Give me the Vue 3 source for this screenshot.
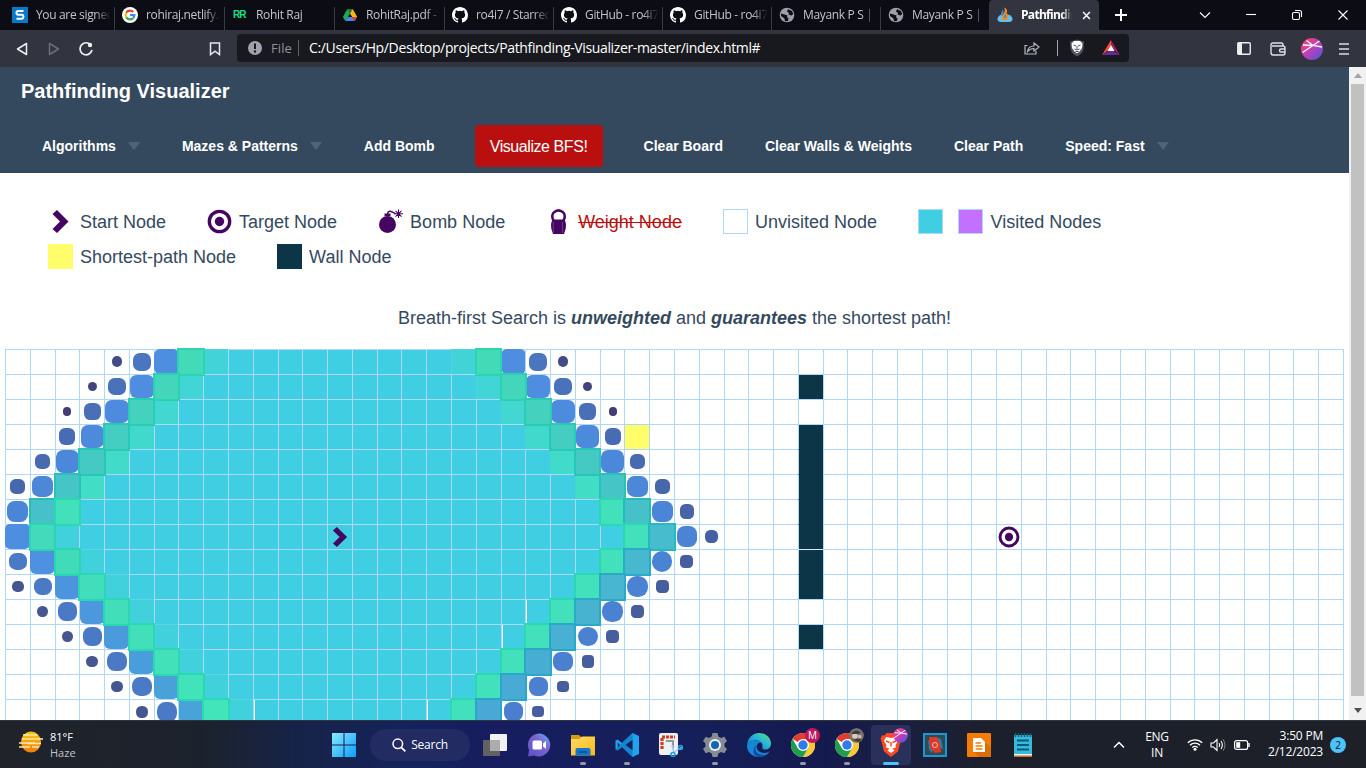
<script setup>
const tabs = [
  { icon: 's', title: 'You are signed' },
  { icon: 'google', title: 'rohiraj.netlify.a' },
  { icon: 'rr', title: 'Rohit Raj' },
  { icon: 'drive', title: 'RohitRaj.pdf -' },
  { icon: 'github', title: 'ro4i7 / Starred' },
  { icon: 'github', title: 'GitHub - ro4i7' },
  { icon: 'github', title: 'GitHub - ro4i7' },
  { icon: 'globe', title: 'Mayank P S | P' },
  { icon: 'globe', title: 'Mayank P S | P' },
  { icon: 'fire', title: 'Pathfindin', active: true },
]

const mix = (a, b, t) => a.map((v, i) => Math.round(v + (b[i] - v) * t))
const rgb = (c) => `rgb(${c.join(',')})`
const lerp = (a, b, t) => a + (b - a) * t

function dot(size, radius, color) {
  return {
    kind: 'dot',
    style: { width: size + 'px', height: size + 'px', borderRadius: radius, background: rgb(color) },
  }
}
function tile(bg, edge) {
  return { kind: 'tile', style: { background: rgb(bg), borderColor: `rgba(${edge.join(',')},.65)` } }
}

function describe(row, col) {
  if (col === 25 && row === 3) return { cls: 'short' }
  if (col === 32 && (row === 1 || (row >= 3 && row <= 9) || row === 11)) {
    const first = row === 1 || row === 3 || row === 11
    return { cls: row === 8 ? 'wall seam' : first ? 'wall first' : 'wall' }
  }
  const d = Math.abs(col - 13) + Math.abs(row - 7)
  const left = col < 13
  const late = left && row >= 7
  const k = late ? d + 1 : d
  const up = row / 7
  const down = (row - 7) / 7
  if (k === 16) {
    if (late) return row > 8 ? dot(lerp(11, 12, down), '45%', [70, 86, 145]) : {}
    return row < 3 ? dot(10.5 - row * 1.2, '48%', mix([69, 75, 134], [67, 61, 115], row / 2)) : {}
  }
  if (k === 15) {
    if (late) return dot(lerp(17, 20, down), '42%', [74, 122, 198])
    if (row < 8) return dot(lerp(18, 13.5, up), '38%', mix([74, 117, 191], [70, 97, 163], up))
    return dot(lerp(13.5, 11.5, down), '34%', [70, 94, 157])
  }
  if (k === 14) {
    if (late) {
      return {
        ...dot(25, row === 7 ? '5px' : '3px 3px 6px 6px', mix([78, 142, 225], [73, 163, 216], down)),
        kind: row === 7 ? 'dot' : 'dot rim',
      }
    }
    if (row < 8) return dot(lerp(24.5, 20.5, up), lerp(24, 38, up) + '%', mix([78, 142, 225], [75, 132, 213], up))
    return dot(lerp(21, 19, down), row < 12 ? '48%' : '40%', mix([75, 132, 213], [75, 126, 206], down))
  }
  if (k === 13) {
    if (late) return tile(mix([66, 218, 186], [66, 228, 185], down), [29, 212, 174])
    if (row < 8) return tile(mix([67, 218, 184], [70, 188, 204], up), mix([31, 211, 172], [18, 184, 184], up))
    return tile(mix([71, 187, 204], [73, 168, 214], down), [24, 166, 196])
  }
  if (k === 12) {
    if (late) return { cls: 'visited settling' }
    if (row < 6) return { cls: 'visited', style: { background: rgb(mix([66, 211, 217], [66, 221, 197], row / 5)), borderColor: rgb(mix([82, 209, 222], [66, 216, 200], row / 5)) } }
    return tile([66, 225, 188], [29, 212, 170])
  }
  if (k < 12) {
    const gap = (row === 10 && col === 21) || (row === 11 && col === 20) || (row === 14 && (col === 10 || col === 17))
    return { cls: gap ? 'visited gap' : 'visited' }
  }
  return {}
}

const cells = []
for (let r = 0; r < 15; r++) {
  for (let c = 0; c < 54; c++) {
    const info = describe(r, c)
    cells.push({
      key: r * 54 + c,
      cls: info.cls || '',
      own: info.kind ? null : info.style,
      kind: info.kind,
      style: info.style,
      start: r === 7 && c === 13,
      target: r === 7 && c === 40,
    })
  }
}
</script>

<template>
  <div class="screen">
    <svg width="0" height="0" class="defs">
      <defs>
        <linearGradient id="win" x1="0" y1="0" x2="1" y2="1"><stop offset="0" stop-color="#8be9ff" /><stop offset="1" stop-color="#0a9cfb" /></linearGradient>
        <linearGradient id="ava" x1="0" y1="0" x2="1" y2="1"><stop offset="0" stop-color="#f34a55" /><stop offset=".45" stop-color="#cc3bb4" /><stop offset="1" stop-color="#3f5be0" /></linearGradient>
        <linearGradient id="edge" x1="1" y1="0" x2="0" y2="1"><stop offset="0" stop-color="#5fe06a" /><stop offset=".45" stop-color="#27b6dd" /><stop offset="1" stop-color="#0b60b8" /></linearGradient>
        <linearGradient id="haze" x1="0" y1="0" x2="0" y2="1"><stop offset="0" stop-color="#fbc70b" /><stop offset="1" stop-color="#f37a0a" /></linearGradient>
        <linearGradient id="chat" x1="0" y1="1" x2="1" y2="0"><stop offset="0" stop-color="#5b50c4" /><stop offset=".6" stop-color="#7c63d0" /><stop offset="1" stop-color="#54b8f0" /></linearGradient>
        <linearGradient id="folder" x1="0" y1="0" x2="1" y2="1"><stop offset="0" stop-color="#ffdb62" /><stop offset="1" stop-color="#fbb81c" /></linearGradient>
        <symbol id="chrome" viewBox="0 0 24 24">
          <circle cx="12" cy="12" r="12" fill="#fff" />
          <path d="M12 12 1.6 6A12 12 0 0 1 22.4 6H12z" fill="#e33b2e" />
          <path d="M12 6H22.4A12 12 0 0 1 12 24L17.2 15z" fill="#fcc934" />
          <path d="M1.6 6 6.8 15 17.2 15 12 24A12 12 0 0 1 1.6 6z" fill="#1e9e4b" />
          <circle cx="12" cy="12" r="6" fill="#fff" /><circle cx="12" cy="12" r="4.7" fill="#2f7bed" />
        </symbol>
        <symbol id="avatar" viewBox="0 0 22 22">
          <circle cx="11" cy="11" r="11" fill="url(#ava)" />
          <path d="M1.500 14.500 18.500 3M5.500 2.500 12 7.500 21 9M2 7 12 7.500" stroke="#fff" stroke-width="1.300" fill="none" />
        </symbol>
        <symbol id="chev" viewBox="0 0 25 25"><path d="M4.500 5 9 1 20.500 12.500 9 24 4.500 20 12 12.500z" fill="#440661" /></symbol>
        <symbol id="aim" viewBox="0 0 25 25"><circle cx="12.500" cy="12.500" r="10.200" fill="none" stroke="#440661" stroke-width="3.300" /><circle cx="12.500" cy="12.500" r="4.700" fill="#440661" /></symbol>
      </defs>
    </svg>

    <header class="tabstrip">
      <div v-for="(t, i) in tabs" :key="i" class="tab" :class="{ active: t.active }">
        <svg v-if="t.icon === 's'" class="fav" viewBox="0 0 16 16"><rect width="16" height="16" fill="#0879c9" /><path d="M11.500 4H6.200Q4.500 4 4.500 5.800T6.200 7.800H9.800Q11.400 7.800 11.400 9.700T9.800 11.800H4.500" fill="none" stroke="#fff" stroke-width="2" /></svg>
        <svg v-else-if="t.icon === 'google'" class="fav" viewBox="0 0 16 16"><circle cx="8" cy="8" r="8" fill="#fff" /><g fill="none" stroke-width="2.200"><path d="M4.200 5.800A4.400 4.400 0 0 1 11.200 4.900" stroke="#ea4335" /><path d="M4.300 10.300A4.400 4.400 0 0 1 4.200 5.700" stroke="#fbbc05" /><path d="M11.100 11.100A4.400 4.400 0 0 1 4.300 10.300" stroke="#34a853" /><path d="M8 8H12.400A4.400 4.400 0 0 1 11.100 11.100" stroke="#4285f4" /></g></svg>
        <span v-else-if="t.icon === 'rr'" class="fav rr">RR</span>
        <svg v-else-if="t.icon === 'drive'" class="fav" viewBox="0 0 16 16"><path d="M5.300 2H10.700L8 6.500z" fill="#188038" /><path d="M5.300 2 .8 10 3.300 14 8 6.500z" fill="#20a757" /><path d="M10.700 2 15.200 10H10.200L8 6.500z" fill="#fbbc04" /><path d="M3.300 14 5.700 10H10.300L12.700 14z" fill="#4285f4" /><path d="M10.200 10H15.200L12.700 14z" fill="#ea4335" /></svg>
        <svg v-else-if="t.icon === 'github'" class="fav" viewBox="0 0 16 16"><path fill="#fff" d="M8 0C3.580 0 0 3.580 0 8c0 3.540 2.290 6.530 5.470 7.590.4.070.55-.17.55-.38 0-.19-.01-.82-.01-1.490-2.010.37-2.530-.49-2.690-.94-.09-.23-.48-.94-.82-1.130-.28-.15-.68-.52-.01-.53.63-.01 1.080.58 1.230.82.720 1.210 1.870.87 2.330.66.070-.52.28-.87.51-1.070-1.780-.2-3.640-.89-3.640-3.950 0-.87.31-1.590.82-2.150-.08-.2-.36-1.020.08-2.120 0 0 .67-.21 2.200.82a7.500 7.500 0 0 1 4 0c1.530-1.040 2.200-.82 2.200-.82.44 1.100.16 1.920.08 2.120.51.56.82 1.270.82 2.150 0 3.070-1.870 3.750-3.650 3.950.29.25.54.73.54 1.480 0 1.070-.01 1.930-.01 2.200 0 .21.15.46.55.38A8 8 0 0 0 16 8c0-4.420-3.580-8-8-8z" /></svg>
        <svg v-else-if="t.icon === 'globe'" class="fav" viewBox="0 0 16 16"><circle cx="8" cy="8" r="7.300" fill="#9ca0aa" /><path d="M2 6.500 5.500 7.500 8.500 8.500 8 10.500 9.500 11 9 14 6 14.200 5.500 11.500 2 9zM9 2.200 8 4.500 10 6 9.500 7.500 12.500 8.500 14.200 7 13 4z" fill="#0d0d16" /></svg>
        <svg v-else class="fav" viewBox="0 0 16 16"><path d="M4.500 7.500C-.5 9-1 15 4 15H12C17 15 16.500 9 11.500 7.500L9 13 6 13z" fill="#5cc4f5" /><path d="M7 .5C10 1.500 11 4 9.500 6 12.500 8 12 13.500 8 13.500 4 13.500 3.500 9.500 5.800 7.500 8 5.500 8.200 3 7 .5z" fill="#f58a28" /><path d="M5.500 2.500C4.500 4.500 4.500 6.500 3.500 8.500L5.500 8C7 6 6.500 4 5.500 2.500z" fill="#2e95dc" /><path d="M8 7.200C6.500 8.500 6.300 10.500 8 11 10 11 9.800 8.500 8 7.200z" fill="#2e95dc" /></svg>
        <span class="title">{{ t.title }}</span>
        <svg v-if="t.active" class="x" viewBox="0 0 10 10"><path d="M1.200 1.200 8.800 8.800M8.800 1.200 1.200 8.800" stroke="#fff" stroke-width="1.700" /></svg>
      </div>
      <svg class="plus" viewBox="0 0 12 12"><path d="M6 0V12M0 6H12" stroke="#fff" stroke-width="2" /></svg>
      <div class="winctl">
        <svg viewBox="0 0 12 12"><path d="M1 3.500 6 8.500 11 3.500" /></svg>
        <svg viewBox="0 0 12 12"><path d="M1 5.500H11" /></svg>
        <svg viewBox="0 0 12 12"><rect x="1.500" y="3.500" width="7" height="7" rx="1.500" /><path d="M4 1.500H8.500Q10.500 1.500 10.500 3.500V8" /></svg>
        <svg viewBox="0 0 12 12"><path d="M1.500 1.500 10.500 10.500M10.500 1.500 1.500 10.500" /></svg>
      </div>
    </header>

    <div class="toolbar">
      <svg class="back" viewBox="0 0 12 14"><path d="M10.500 1.500V12.500L1.500 7z" fill="none" stroke="#f0f0f4" stroke-width="1.500" stroke-linejoin="round" /></svg>
      <svg class="fwd" viewBox="0 0 12 14"><path d="M1.500 1.500V12.500L10.500 7z" fill="none" stroke="#6b6d7a" stroke-width="1.500" stroke-linejoin="round" /></svg>
      <svg class="reload" viewBox="0 0 16 16"><path d="M10.500 2.300A6 6 0 1 0 13.800 9.500" fill="none" stroke="#f0f0f4" stroke-width="1.700" stroke-linecap="round" /><circle cx="12" cy="4" r="2.200" fill="#f0f0f4" /></svg>
      <svg class="mark" viewBox="0 0 12 14"><path d="M1.500 1H10.500V12.600L6 9.200 1.500 12.600z" fill="none" stroke="#e6e6ec" stroke-width="1.500" /></svg>
      <div class="omni">
        <svg class="info" viewBox="0 0 14 14"><circle cx="7" cy="7" r="7" fill="#a0a3ae" /><path d="M7 2.500V8" stroke="#17191f" stroke-width="2" /><circle cx="7" cy="10.500" r="1.200" fill="#17191f" /></svg>
        <span class="file">File</span><i class="bar"></i>
        <span class="url">C:/Users/Hp/Desktop/projects/Pathfinding-Visualizer-master/index.html#</span>
        <svg class="share" viewBox="0 0 16 14"><path d="M3.500 4.500H1V13H12V10M3.500 10.500C4 6.500 6.500 5 10 5V2L15 6 10 10V7.500C7.500 7.500 5.500 8.200 3.500 10.500z" fill="none" stroke="#b4b7c0" stroke-width="1.200" /></svg>
        <i class="bar two"></i>
        <svg class="lion" viewBox="0 0 16 18"><path d="M8 .5 15 2.500 14.500 10Q13.500 15 8 17.500 2.500 15 1.500 10L1 2.500z" fill="#4e5263" /><path d="M5 2 11 2 13.500 4.500 13 9 10.500 12.500 8 14.500 5.500 12.500 3 9 2.500 4.500z" fill="#fff" /><path d="M4.500 6 7 7M11.500 6 9 7M8 7V10M5.500 10 8 11 10.500 10M6.500 12.500 9.500 12.500" stroke="#4e5263" stroke-width="1" fill="none" /></svg>
        <svg class="bat" viewBox="0 0 18 16"><path d="M9 0 0 15 9 8z" fill="#ff4c24" /><path d="M9 0 18 15 9 8z" fill="#9e1f63" /><path d="M0 15H18L9 9.500z" fill="#662d91" /><path d="M9 5 12.500 11H5.500z" fill="#fff" /></svg>
      </div>
      <svg class="side" viewBox="0 0 14 13"><rect x=".75" y=".75" width="12.500" height="11.500" rx="1" fill="none" stroke="#eee" stroke-width="1.400" /><rect x="1" y="1" width="4" height="11" fill="#eee" /></svg>
      <svg class="wallet" viewBox="0 0 16 14"><path d="M13 4V2.500Q13 1 11.500 1H3Q1 1 1 3V10.500Q1 13 3 13H13Q15 13 15 11V6Q15 4 13 4H2M15 7H11Q9.500 7 9.500 8.500T11 10H15" fill="none" stroke="#e0e0e6" stroke-width="1.400" /></svg>
      <svg class="ava"><use href="#avatar" /></svg>
      <svg class="burger" viewBox="0 0 10 12"><path d="M0 1H10M0 6H10M0 11H10" stroke="#dcdce2" stroke-width="1.500" /></svg>
    </div>

    <div class="viewport">
      <main class="page">
        <nav class="navbar">
          <h1>Pathfinding Visualizer</h1>
          <div class="menu">
            <a>Algorithms<i class="caret"></i></a>
            <a>Mazes &amp; Patterns<i class="caret"></i></a>
            <a>Add Bomb</a>
            <button>Visualize BFS!</button>
            <a>Clear Board</a>
            <a>Clear Walls &amp; Weights</a>
            <a>Clear Path</a>
            <a>Speed: Fast<i class="caret"></i></a>
          </div>
        </nav>
        <section class="legend">
          <div class="item"><svg class="ico"><use href="#chev" /></svg><span>Start Node</span></div>
          <div class="item"><svg class="ico"><use href="#aim" /></svg><span>Target Node</span></div>
          <div class="item"><svg class="ico" viewBox="0 0 25 25"><circle cx="9.500" cy="15.500" r="8.500" fill="#440661" /><path d="M6.500 7V4.500H12.500V7" fill="#440661" /><path d="M9.500 5Q10 1.500 13 2.500T17.500 5" fill="none" stroke="#440661" stroke-width="1.400" /><path d="M20.500 .5V9M16.500 4.700H25M17.500 1.800 23.500 7.700M23.500 1.800 17.500 7.700" stroke="#440661" stroke-width="1.100" /></svg><span>Bomb Node</span></div>
          <div class="item weight"><svg class="ico" viewBox="0 0 25 25"><path d="M7.500 11.500Q5 7 7.500 3.700 12.500-1 17.500 3.700 20 7 17.500 11.500" fill="none" stroke="#440661" stroke-width="2.500" /><path d="M6.500 10.500H18.500Q20.500 14 19.700 19.500L18 25H7L5.300 19.500Q4.500 14 6.500 10.500z" fill="#440661" /><path d="M7.300 13V24M16.500 13V24" stroke="#79529a" stroke-width=".7" /></svg><s>Weight Node</s></div>
          <div class="item"><i class="sw"></i><span>Unvisited Node</span></div>
          <div class="item"><i class="sw blue"></i><i class="sw purple"></i><span>Visited Nodes</span></div>
          <div class="item"><i class="sw yellow"></i><span>Shortest-path Node</span></div>
          <div class="item"><i class="sw dark"></i><span>Wall Node</span></div>
        </section>
        <p class="message">Breath-first Search is <b>unweighted</b> and <b>guarantees</b> the shortest path!</p>
        <section class="board">
          <div v-for="c in cells" :key="c.key" class="cell" :class="c.cls" :style="c.own">
            <span v-if="c.kind" :class="c.kind" :style="c.style"></span>
            <svg v-if="c.start" class="mid" viewBox="0 0 25 25"><use href="#chev" /></svg>
            <svg v-if="c.target" class="mid" viewBox="0 0 25 25"><use href="#aim" /></svg>
          </div>
        </section>
      </main>
      <aside class="scroll"><i class="up"></i><i class="thumb"></i><i class="down"></i></aside>
    </div>

    <footer class="taskbar">
      <div class="weather">
        <svg viewBox="0 0 24 22"><ellipse cx="12" cy="11" rx="10" ry="10.500" fill="url(#haze)" /><path d="M4 4H18M3 8H24M0 12H16M8 12.500H22M0 16H11M13 16H20" stroke="#fbe6b4" stroke-width="1.700" /></svg>
        <div><div>81°F</div><div class="dim">Haze</div></div>
      </div>
      <div class="apps">
        <div class="app"><svg viewBox="0 0 24 24"><path d="M0 0H11.500V11.500H0zM12.500 0H24V11.500H12.500zM0 12.500H11.500V24H0zM12.500 12.500H24V24H12.500z" fill="url(#win)" /></svg></div>
        <div class="search"><svg viewBox="0 0 14 14"><circle cx="5.800" cy="5.800" r="4.800" fill="none" stroke="#fff" stroke-width="1.500" /><path d="M9.300 9.300 13.300 13.300" stroke="#fff" stroke-width="1.800" /></svg>Search</div>
        <div class="app"><svg viewBox="0 0 24 24"><rect x="7" y="1" width="17" height="17" rx="1" fill="#f2f2f2" /><rect x="0" y="7" width="17" height="16" rx="1" fill="#626262" /><rect x="7" y="7" width="10" height="11" fill="#acacac" /></svg></div>
        <div class="app"><svg viewBox="0 0 24 24"><path d="M12 .5A11.500 11.500 0 1 1 7 22.500L1 23.500 2 17A11.500 11.500 0 0 1 12 .5z" fill="url(#chat)" /><rect x="5.500" y="7.500" width="9.500" height="9" rx="1.500" fill="#fff" /><path d="M16 10.500 19 8V16L16 13.500z" fill="#fff" /></svg></div>
        <div class="app run"><svg viewBox="0 0 24 24"><path d="M0 2H8L10 4H22V9H0z" fill="#d99a11" /><path d="M0 6H8L11 3.500H24V22.500H0z" fill="url(#folder)" /><path d="M4.500 22.500V17Q4.500 15 6.500 15H17.500Q19.500 15 19.500 17V22.500z" fill="#1377cd" /><path d="M8 19H16" stroke="#0a569f" stroke-width="2" /></svg></div>
        <div class="app run"><svg viewBox="0 0 24 24"><path d="M17.500 0 24 3V21L17.500 24 7 14 2.500 17.500.5 16.200V7.800L2.500 6.500 7 10z" fill="#24a3ed" /><path d="M17.500 0V24L7 14 2.500 17.500.5 16.200 7 10z" fill="#0879c8" opacity=".7" /><path d="M17.500 6.800V17.200L10.500 12zM2.800 9.500V14.500L5 12z" fill="#17205a" /></svg></div>
        <div class="app"><svg viewBox="0 0 24 24"><rect x="0" y="0" width="19" height="22" rx="2" fill="#eef0f3" /><path d="M3 16V4H16" fill="none" stroke="#d23c1a" stroke-width="3.200" stroke-dasharray="3 1" /><path d="M7 8H14V15" fill="none" stroke="#8f979f" stroke-width="2" /><path d="M13 12 15 20M23 14 14 20" stroke="#9ccdf0" stroke-width="1.500" /><circle cx="14" cy="21.500" r="2" fill="none" stroke="#249ce8" stroke-width="1.600" /><circle cx="21.500" cy="14.500" r="2" fill="none" stroke="#249ce8" stroke-width="1.600" /></svg></div>
        <div class="app run"><svg viewBox="0 0 24 24"><path d="M9.500 0H14.500L15.300 3.500 18 5 21.300 3.800 24 8 21.500 10.500V13.500L24 16 21.300 20.200 18 19 15.300 20.500 14.500 24H9.500L8.700 20.500 6 19 2.700 20.200 0 16 2.500 13.500V10.500L0 8 2.700 3.800 6 5 8.700 3.500z" fill="#858c93" /><circle cx="12" cy="12" r="6" fill="#eceff1" /><circle cx="12" cy="12" r="4" fill="#1067ad" /></svg></div>
        <div class="app"><svg viewBox="0 0 24 24"><path d="M12 0C19 0 24 5 24 10.500 24 15 20.500 17 17.500 16.500 14.500 16 15.500 14 15.500 12.500 15.500 9.500 12.500 7.500 8.500 7.500 3.500 7.500.5 10.500 0 13 0 5.500 5.500 0 12 0z" fill="url(#edge)" /><path d="M0 13C.5 9.500 4 7.500 8.500 7.500 11 7.500 13 8.300 14.200 9.500 8.500 8.500 7 19 17 20 19.500 20 21.500 19 22.700 18.200 20.500 22 16.500 24 12 24 5 24 0 19 0 13z" fill="#1687d4" /><path d="M9.500 12C5.500 19.500 13 23 19.500 21.500 17.500 23.200 15 24 12 24 6 24 4.500 16 9.500 12z" fill="#0f4da0" /></svg></div>
        <div class="app run"><svg viewBox="0 0 24 24"><use href="#chrome" /></svg><b class="badge m">M</b></div>
        <div class="app run"><svg viewBox="0 0 24 24"><use href="#chrome" /></svg><svg class="badge" viewBox="0 0 14 14"><circle cx="7" cy="7" r="7" fill="#77736f" /><circle cx="5.500" cy="7.500" r="2.600" fill="#dfcbbd" /><circle cx="10" cy="8" r="1.800" fill="#cfb8aa" /><path d="M2 5Q6 0 11 4L9 5.500 4 5.500zM3 11 8 10 12 10.500 9 13z" fill="#3f3d40" /></svg></div>
        <div class="app on"><svg viewBox="0 0 24 24"><path d="M7.500 0H16.500L18.500 2.500 21 2.200 22.500 5.500 21.500 8.500 19 18.500 12 24 5 18.500 2.500 8.500 1.500 5.500 3 2.200 5.500 2.500z" fill="#fb4a21" /><path d="M7 4 12 5 17 4 19 8 16.500 12 17 14.500 13.500 15.500 15.500 17.500 12 20 8.500 17.500 10.500 15.500 7 14.500 7.500 12 5 8z" fill="#fff" /><path d="M7 8 10.500 9.500M17 8 13.500 9.500M12 9V13.500" stroke="#fb4a21" stroke-width="1.500" /></svg><svg class="badge" viewBox="0 0 22 22"><use href="#avatar" width="22" height="22" /></svg></div>
        <div class="app"><svg viewBox="0 0 24 24"><rect x="1" y="1" width="22" height="22" fill="#37474f" stroke="#149bd7" stroke-width="2" /><path d="M5 7 11 11 9 20 6 17z" fill="#1684b8" /><path d="M13 4 18 6 20 16 15 14z" fill="#1684b8" /><path d="M6 4H14L17 10 18 19 12 20 7 15z" fill="#dc3b2c" /><circle cx="12" cy="12" r="2.500" fill="none" stroke="#ffb4a5" stroke-width="1" /></svg></div>
        <div class="app"><svg viewBox="0 0 24 24"><rect width="24" height="24" rx="1" fill="#f57c00" /><path d="M17 8 24 15V24H12L7 19z" fill="#dc6d00" /><path d="M6 5H14L18 9V19H6z" fill="#fff" /><path d="M8.500 10H14M8.500 13H15.500M8.500 16H15.500" stroke="#f57c00" stroke-width="1.300" /></svg></div>
        <div class="app"><svg viewBox="0 0 24 24"><rect x="3" y="2" width="18" height="21" fill="#37bbd9" /><path d="M3 22H21V24H3z" fill="#c9702e" /><path d="M3 21H21V22.500H3z" fill="#f0f0f0" /><path d="M4.500 0V4M7.500 0V4M10.500 0V4M13.500 0V4M16.500 0V4M19.500 0V4" stroke="#0d5d7a" stroke-width="1.400" /><path d="M6 7.500H18M6 12H18M6 16.500H18" stroke="#075a7c" stroke-width="2" /></svg></div>
      </div>
      <div class="tray">
        <svg class="t1" viewBox="0 0 12 8"><path d="M1 6.500 6 1.500 11 6.500" fill="none" stroke="#fff" stroke-width="1.500" /></svg>
        <div class="lang">ENG<br />IN</div>
        <svg class="wifi" viewBox="0 0 16 13"><g fill="none" stroke="#fff" stroke-width="1.300"><path d="M.8 4.800A10.200 10.200 0 0 1 15.200 4.800M3 7.300A7 7 0 0 1 13 7.300M5.300 9.600A3.800 3.800 0 0 1 10.700 9.600" /></g><circle cx="8" cy="11.300" r="1.500" fill="#fff" /></svg>
        <svg class="vol" viewBox="0 0 16 14"><path d="M1 5H3.500L7 1.500V12.500L3.500 9H1z" fill="none" stroke="#fff" stroke-width="1.100" /><path d="M9 5Q10.500 7 9 9M11 3Q13.700 7 11 11" fill="none" stroke="#fff" stroke-width="1.100" /><path d="M13 1.200Q17 7 13 12.800" fill="none" stroke="#777" stroke-width="1.100" /></svg>
        <svg class="batt" viewBox="0 0 16 10"><rect x=".6" y=".6" width="13" height="8.800" rx="2" fill="none" stroke="#fff" stroke-width="1.200" /><rect x="2.200" y="2.200" width="4" height="5.600" fill="#fff" /><path d="M15 3V7" stroke="#fff" stroke-width="1.400" /></svg>
        <div class="clock">3:50 PM<br />2/12/2023</div>
        <div class="count">2</div>
      </div>
    </footer>
  </div>
</template>

<style>
html, body { margin: 0; overflow: hidden; }
</style>

<style scoped>
.screen { width: 1366px; height: 768px; overflow: hidden; display: flex; flex-direction: column; font-family: "Open Sans", "Noto Sans", sans-serif; background: #fff; }
.screen svg { display: block; flex: none; }
.screen svg.defs { position: absolute; }
i { display: block; flex: none; font-style: normal; }

.tabstrip { height: 30px; flex: none; background: #0c0c15; display: flex; align-items: center; padding-left: 4px; }
.tab { width: 109px; height: 30px; box-sizing: border-box; flex: none; display: flex; align-items: center; padding: 0 2px 0 8px; position: relative; }
.tab:nth-child(-n+4), .tab.active { width: 110px; }
.tab::after { content: ""; position: absolute; right: -1px; top: 7px; width: 1px; height: 23px; background: #3b3b43; }
.tab:nth-child(9)::after, .tab.active::after { display: none; }
.fav { width: 16px; height: 16px; flex: none; margin-right: 8px; }
.rr { color: #16e084; font: bold 10px/16px "Liberation Sans", sans-serif; letter-spacing: -.9px; text-indent: 1px; }
.title { flex: 1; min-width: 0; overflow: hidden; white-space: nowrap; color: #c3c4cb; font-size: 12px; letter-spacing: -.34px; line-height: 20px; -webkit-mask-image: linear-gradient(90deg, #000 78%, transparent 98%); mask-image: linear-gradient(90deg, #000 78%, transparent 98%); }
.tab.active { background: #32343f; border-radius: 4px 4px 0 0; padding-right: 8px; }
.active .title { color: #fff; font-weight: 700; letter-spacing: -.7px; }
.x { width: 9px; height: 9px; margin-left: 9px; }
.plus { width: 12px; height: 12px; margin-left: 16px; }
.winctl { display: flex; gap: 34px; margin-left: auto; margin-right: 17px; margin-top: -1px; }
.winctl svg { width: 12px; height: 12px; fill: none; stroke: #fff; stroke-width: 1.100; }

.toolbar { height: 37px; flex: none; background: #32343f; display: flex; align-items: center; padding-left: 16px; }
.back, .fwd { width: 12px; height: 14px; }
.fwd { margin-left: 20px; }
.reload { width: 16px; height: 16px; margin-left: 18px; }
.mark { width: 12px; height: 14px; margin-left: 115px; }
.omni { width: 892px; height: 28px; box-sizing: border-box; margin-left: 16px; margin-top: -1px; background: #17191f; border-radius: 4px; display: flex; align-items: center; padding-left: 11px; flex: none; }
.info { width: 14px; height: 14px; }
.file { color: #8f929c; font-size: 13px; margin-left: 9px; width: 22px; letter-spacing: .1px; }
.bar { width: 1px; height: 16px; background: #5c5e69; margin-left: 5px; }
.url { color: #fff; font-size: 14px; letter-spacing: -.36px; margin-left: 10px; width: 715px; white-space: nowrap; margin-top: -1px; }
.share { width: 16px; height: 14px; }
.bar.two { margin-left: 17px; background: #a2a3ac; }
.lion { width: 16px; height: 18px; margin-left: 11px; }
.bat { width: 18px; height: 16px; margin-left: 17px; }
.side { width: 14px; height: 13px; margin-left: 108px; }
.wallet { width: 16px; height: 14px; margin-left: 19px; }
.ava { width: 22px; height: 22px; margin-left: 15px; }
.burger { width: 10px; height: 12px; margin-left: 16px; }

.viewport { height: 653px; flex: none; display: flex; overflow: hidden; font-family: "Liberation Sans", Arial, sans-serif; color: #34495e; }
.page { width: 1349px; flex: none; overflow: hidden; }
.navbar { height: 106px; background: #34495e; color: #fff; overflow: hidden; }
h1 { margin: 13px 0 0 21px; font-size: 20px; line-height: 22px; font-weight: 700; }
.menu { display: flex; align-items: center; height: 42px; margin-top: 23px; padding-left: 21px; font-size: 14px; font-weight: 700; }
.menu a { display: flex; align-items: center; padding: 0 21px; white-space: nowrap; line-height: 20px; }
.caret { margin-left: 12px; border: 6px solid transparent; border-top: 8px solid #4f6479; border-bottom: 0; }
button { width: 128px; height: 42px; margin: 0 20px 0 19px; padding: 2px 0 0; border: 0; border-radius: 4px; background: #b90f0f; color: #fff; font: 16px "Liberation Sans", Arial, sans-serif; letter-spacing: -.43px; }
.legend { display: flex; flex-wrap: wrap; column-gap: 41px; row-gap: 10px; padding: 36px 200px 0 48px; font-size: 18px; }
.item { display: flex; align-items: center; height: 25px; white-space: nowrap; }
.item span, .item s { padding-top: 1px; }
.ico { width: 25px; height: 25px; margin-right: 7px; }
.weight { color: #b90f0f; }
.weight .ico { margin-right: 7.500px; margin-left: -.5px; }
.sw { width: 25px; height: 25px; box-sizing: border-box; border: 1px solid #afd8f8; margin-right: 7px; }
.blue { background: #40cee3; margin-right: 15px; }
.purple { background: #c370ff; margin-right: 7.500px; }
.yellow { background: #fffe6a; border: 0; }
.dark { background: #0c3547; border: 0; }
.message { margin: 38px 0 0; height: 42px; line-height: 22px; text-align: center; font-size: 18px; }
.message b { font-style: italic; }
.board { width: 1338px; margin-left: 5px; display: grid; grid-template-columns: repeat(54, 1fr); grid-auto-rows: 25px; border-right: 1px solid #afd8f8; }
.cell { border-left: 1px solid #afd8f8; border-top: 1px solid #afd8f8; position: relative; box-sizing: border-box; min-width: 0; display: grid; place-items: center; }
.visited { background: #40cee3; }
.settling { background: #41d1dc; border-color: #5ed3e4; }
.gap { box-shadow: inset 1px 0 #fff; }
.short { background: #fffe6a; }
.wall { background: #0c3547; border-top-color: #0c3547; }
.first { border-top-color: #afd8f8; }
.seam { border-top-color: #dcecf4; }
.dot { display: block; flex: none; margin: -1px; position: relative; top: -.5px; }
.rim { border-top: 2px solid rgba(30, 124, 205, .7); box-sizing: border-box; }
.tile { position: absolute; inset: -2px -1.500px -1.500px -2px; border: 2px solid; z-index: 1; }
.mid { width: 22px; height: 22px; position: relative; top: -.5px; }

.scroll { width: 17px; background: #f1f1f1; display: flex; flex-direction: column; align-items: center; }
.up { border: 4px solid transparent; border-bottom: 5px solid #a3a3a3; border-top: 0; margin-top: 6px; }
.thumb { width: 13px; height: 612px; background: #c1c1c1; margin-top: 6px; }
.down { border: 4px solid transparent; border-top: 5px solid #505050; border-bottom: 0; margin-top: 12px; }

.taskbar { height: 48px; flex: none; box-sizing: border-box; border-top: 1px solid #30343d; display: flex; align-items: center; color: #fff; font-size: 12px; background: linear-gradient(90deg, #20232a 0, #1c222d 15%, #162349 22%, #14235b 30%, #171d5f 36%, #15205a 50%, #151a4f 60%, #191e43 65%, #1c202c 72%, #1d2027 100%); }
.weather { display: flex; align-items: center; width: 322px; line-height: 16px; font-size: 11px; flex: none; }
.weather svg { width: 24px; height: 22px; margin: -5px 7px 0 19px; }
.dim { color: #c1c4ca; }
.apps { display: flex; height: 47px; align-items: center; flex: none; }
.app { width: 40px; height: 40px; margin: 0 2px; position: relative; display: grid; place-items: center; border-radius: 4px; flex: none; }
.app > svg:first-child { width: 24px; height: 24px; }
.run::after, .on::after { content: ""; position: absolute; bottom: 0; left: 17px; width: 6px; height: 3px; border-radius: 2px; background: #9799aa; }
.on { background: #29305a; }
.on::after { left: 12px; width: 16px; background: #4cc2ff; }
.screen .badge { position: absolute; right: 3px; top: 3px; width: 15px; height: 15px; border-radius: 50%; }
.m { background: #c2185b; font: 10px/15px "Open Sans", sans-serif; text-align: center; }
.search { width: 100px; height: 32px; margin: 0 3px 0 4px; border-radius: 16px; background: #222b62; display: flex; align-items: center; justify-content: center; gap: 5px; font-size: 12px; letter-spacing: -.25px; }
.search svg { width: 14px; height: 14px; }
.tray { display: flex; align-items: center; margin-left: auto; padding-right: 20px; flex: none; line-height: 16px; }
.t1 { width: 12px; height: 8px; }
.lang { width: 34px; text-align: center; margin-left: 15px; margin-right: 1px; font-size: 12px; letter-spacing: -.3px; }
.wifi { width: 16px; height: 13px; margin-left: 12px; }
.vol { width: 16px; height: 14px; margin-left: 7px; }
.batt { width: 16px; height: 10px; margin-left: 8px; }
.clock { width: 73px; text-align: right; font-size: 12px; letter-spacing: -.2px; margin-top: -1px; }
.count { width: 16px; height: 16px; margin-left: 7px; border-radius: 50%; background: #4cc2ff; color: #111; font-size: 10px; text-align: center; }
</style>
